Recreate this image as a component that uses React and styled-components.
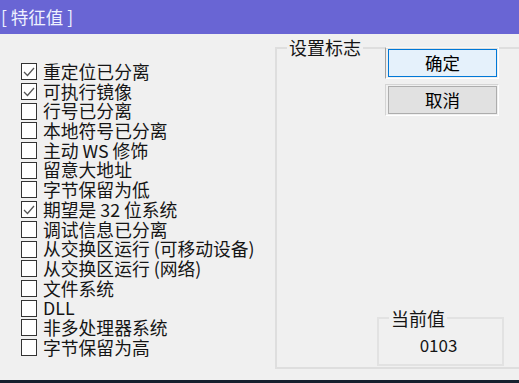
import styled, { createGlobalStyle } from "styled-components";

const GlobalStyle = createGlobalStyle`
  html, body {
    margin: 0;
    padding: 0;
    background: #16202e;
  }
  body {
    font-family: "Noto Sans CJK SC", "Noto Sans", sans-serif;
  }
`;

const Window = styled.div`
  width: 519px;
  height: 380px;
  background: #f0f0f0;
  overflow: hidden;
  display: flex;
  flex-direction: column;
`;

const TitleBar = styled.div`
  height: 34px;
  flex: none;
  background: #6965d4;
  color: #eef1ff;
  font-size: 17.5px;
  line-height: 34px;
  padding-left: 1px;
  white-space: pre;
`;

const Content = styled.div`
  flex: 1;
  display: flex;
`;

const CheckList = styled.div`
  width: 275px;
  flex: none;
  box-sizing: border-box;
  padding: 28px 0 0 21px;
`;

const Row = styled.div`
  display: flex;
  align-items: center;
  height: 19.7px;
  font-size: 17.8px;
  line-height: 19.7px;
  color: #151515;
  white-space: nowrap;
`;

const Box = styled.span`
  width: 16px;
  height: 17px;
  flex: none;
  box-sizing: border-box;
  border: 1px solid #333;
  background: #fff;
  margin-right: 6px;
  display: flex;
  align-items: center;
  justify-content: center;
`;

const Group = styled.div`
  position: relative;
  margin-top: 13px;
  width: 262px;
  height: 322px;
  flex: none;
  box-sizing: border-box;
  border: 2px solid #dedede;
  display: flex;
  flex-direction: column;
`;

const Legend = styled.span`
  position: absolute;
  top: ${(p) => p.$top}px;
  left: 10px;
  padding: 0 2px;
  background: #f0f0f0;
  font-size: 18px;
  line-height: 20px;
  color: #151515;
`;

const ButtonStack = styled.div`
  margin: -2px 0 0 108px;
  display: flex;
  flex-direction: column;
  gap: 5px;
  width: 114px;
`;

const ButtonFrame = styled.div`
  box-sizing: border-box;
  padding: 1px 1px 1px 2px;
  border-left: 1px solid ${(p) => (p.$primary ? "#a0a0a0" : "#d4d4d4")};
  border-top: 1px solid ${(p) => (p.$primary ? "#f8f8f8" : "#d4d4d4")};
  border-right: 1px solid #fff;
  border-bottom: 1px solid #fff;
`;

const Button = styled.button`
  display: block;
  width: 109px;
  height: 28px;
  box-sizing: border-box;
  padding: 0;
  font-family: inherit;
  font-size: 17.5px;
  line-height: 26px;
  color: #000;
  border: 1px solid ${(p) => (p.$primary ? "#0078d7" : "#adadad")};
  background: ${(p) => (p.$primary ? "#e5f1fb" : "#e1e1e1")};
`;

const ValueGroup = styled.div`
  position: relative;
  margin: auto 0 1px 100px;
  width: 127px;
  height: 49px;
  box-sizing: border-box;
  border: 2px solid #e2e2e2;
  display: flex;
  justify-content: center;
`;

const Value = styled.span`
  margin-top: 16px;
  padding-right: 4px;
  font-size: 17px;
  line-height: 20px;
  color: #151515;
`;

const items = [
  ["重定位已分离", true],
  ["可执行镜像", true],
  ["行号已分离", false],
  ["本地符号已分离", false],
  ["主动 WS 修饰", false],
  ["留意大地址", false],
  ["字节保留为低", false],
  ["期望是 32 位系统", true],
  ["调试信息已分离", false],
  ["从交换区运行 (可移动设备)", false],
  ["从交换区运行 (网络)", false],
  ["文件系统", false],
  ["DLL", false],
  ["非多处理器系统", false],
  ["字节保留为高", false],
];

const Check = () => (
  <svg width="12" height="12" viewBox="0 0 12 12">
    <polyline points="1,6 4.5,9.5 11,2" fill="none" stroke="#555" strokeWidth="1.3" />
  </svg>
);

export default function App() {
  return (
    <>
      <GlobalStyle />
      <Window>
        <TitleBar>[ 特征值 ]</TitleBar>
        <Content>
          <CheckList>
            {items.map(([label, checked]) => (
              <Row key={label}>
                <Box>{checked && <Check />}</Box>
                {label}
              </Row>
            ))}
          </CheckList>
          <Group>
            <Legend $top={-12}>设置标志</Legend>
            <ButtonStack>
              <ButtonFrame $primary>
                <Button $primary>确定</Button>
              </ButtonFrame>
              <ButtonFrame>
                <Button>取消</Button>
              </ButtonFrame>
            </ButtonStack>
            <ValueGroup>
              <Legend $top={-11}>当前值</Legend>
              <Value>0103</Value>
            </ValueGroup>
          </Group>
        </Content>
      </Window>
    </>
  );
}
